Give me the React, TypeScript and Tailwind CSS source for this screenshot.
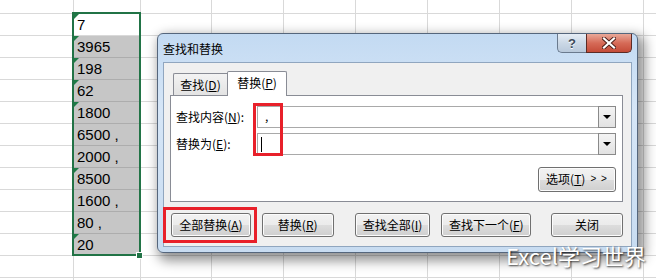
import React from "react";

// column boxes of the sheet (grid line sits on the last pixel of each box)
const cols = [
  "w-[74px]",
  "w-[67px]",
  "w-[71px]",
  "w-[72px]",
  "w-[72px]",
  "w-[72px]",
  "w-[72px]",
  "w-[72px]",
  "w-[72px]",
  "w-[72px]",
];

const values = [
  { v: "7", mark: true },
  { v: "3965", mark: true },
  { v: "198", mark: true },
  { v: "62", mark: true },
  { v: "1800", mark: true },
  { v: "6500 ,", mark: false },
  { v: "2000 ,", mark: false },
  { v: "8500", mark: true },
  { v: "1600 ,", mark: false },
  { v: "80 ,", mark: false },
  { v: "20", mark: true },
];

const cjk = "font-['Noto_Sans_CJK_SC','Liberation_Sans',sans-serif]";
const winBtn =
  "flex h-[24px] items-center justify-center rounded-[3px] border border-[#707070] bg-[linear-gradient(#f2f2f2,#ebebeb_50%,#dddddd_50%,#cfcfcf)] shadow-[inset_0_0_0_1px_#fcfcfc]";

const Sheet = () => {
  const rows = [null, ...values, null, null];
  return (
    <div className="flex flex-col font-['Liberation_Sans',sans-serif] text-[15px] text-black">
      {rows.map((cell, i) => (
        <div key={i} className={i === 0 ? "flex h-[14px] shrink-0" : "flex h-[22px] shrink-0"}>
          {cols.map((w, j) => {
            const inB = j === 1 && cell;
            const grey = inB && i >= 2;
            return (
              <div
                key={j}
                className={`relative shrink-0 border-r border-b border-[#d9d9d9] ${w} ${
                  grey ? "bg-[#c6c6c6] border-b-[#adadad]" : ""
                }`}
              >
                {inB && (
                  <>
                    {cell.mark && (
                      <div className="absolute left-0 top-0 h-0 w-0 border-t-[5px] border-r-[5px] border-t-[#1e7a46] border-r-transparent" />
                    )}
                    <span className="block pl-[3px] leading-[21px] whitespace-pre">{cell.v}</span>
                  </>
                )}
              </div>
            );
          })}
        </div>
      ))}
    </div>
  );
};

const Drop = () => (
  <div className="-my-px -mr-px flex w-[18px] items-center justify-center border border-[#8a8a8a] bg-[linear-gradient(#f4f4f4,#e2e2e2)]">
    <div className="h-0 w-0 border-x-[4px] border-t-[4px] border-x-transparent border-t-black" />
  </div>
);

const Dialog = () => (
  <div
    className={`absolute left-[157px] top-[33px] flex h-[220px] w-[481px] flex-col rounded-[6px] border border-[#55667c] bg-[linear-gradient(180deg,#c3daf2,#d6e6f7_35%,#c8dcf1)] px-[5px] pb-[5px] text-[12px] text-black shadow-[4px_5px_12px_3px_rgba(0,0,0,0.42)] ${cjk}`}
  >
    <div className="flex h-[28px] items-start justify-between">
      <span className="self-center pt-[1px] leading-none">查找和替换</span>
      <div className="flex">
        <div className="flex h-[19px] w-[29px] items-center justify-center rounded-bl-[5px] border border-t-0 border-r-0 border-[#6a7a8e] bg-[linear-gradient(#e6edf5,#cbd8e6_50%,#b9c9db)] font-['Liberation_Sans',sans-serif] text-[13px] font-bold leading-none text-[#3d4a59] [text-shadow:0_1px_0_#fff]">
          ?
        </div>
        <div className="flex h-[19px] w-[46px] items-center justify-center rounded-br-[5px] border border-t-0 border-[#5b2b25] bg-[linear-gradient(#e9a898,#d66b58_50%,#c44b38)]">
          <svg width="14" height="12" viewBox="0 0 14 12">
            <path d="M2 1.5 L12 10.5 M12 1.5 L2 10.5" stroke="#4a1d17" strokeWidth="4" strokeLinecap="square" />
            <path d="M2 1.5 L12 10.5 M12 1.5 L2 10.5" stroke="#ffffff" strokeWidth="2.2" strokeLinecap="square" />
          </svg>
        </div>
      </div>
    </div>

    <div className="flex flex-1 flex-col border border-[#90a6bf] bg-[#f0f0f0] pl-[6px] pr-[8px] pt-[8px]">
      <div className="flex h-[24px] items-end pl-[3px]">
        <div className="flex h-[22px] w-[54px] items-center justify-center rounded-tl-[2px] border border-r-0 border-b-0 border-[#898c95] bg-[linear-gradient(#f3f3f3,#e3e3e3)] pt-[1px] leading-none">
          查找(<u>D</u>)
        </div>
        <div className="relative z-10 -mb-px flex h-[25px] w-[60px] items-start justify-center rounded-t-[2px] border border-b-0 border-[#898c95] bg-white pt-[5px] leading-none">
          替换(<u>P</u>)
        </div>
      </div>

      <div className="flex h-[107px] flex-col border border-[#898c95] bg-white pt-[10px]">
        <div className="flex h-[22px] items-center">
          <span className="w-[86px] pl-[5px] leading-none">
            查找内容(<u>N</u>):
          </span>
          <div className="mr-[6px] flex h-[22px] flex-1 border border-[#a9a9a9]">
            <div className="flex-1 pl-[7px] leading-[18px]">,</div>
            <Drop />
          </div>
        </div>
        <div className="mt-[5px] flex h-[22px] items-center">
          <span className="w-[86px] pl-[5px] leading-none">
            替换为(<u>E</u>):
          </span>
          <div className="mr-[6px] flex h-[22px] flex-1 border border-[#a9a9a9]">
            <div className="flex flex-1 items-center pl-[3px]">
              <span className="h-[15px] w-px bg-black" />
            </div>
            <Drop />
          </div>
        </div>
        <div className="mr-[6px] mt-[12px] flex justify-end">
          <div className={`${winBtn} h-[25px] w-[78px] gap-[5px] pb-[1px] leading-none`}>
            <span>
              选项(<u>T</u>)
            </span>
            <span className="font-['Liberation_Sans',sans-serif] text-[10px] tracking-[1px]">&gt; &gt;</span>
          </div>
        </div>
      </div>

      <div className="ml-[1px] mt-[11px] flex leading-none">
        <div className={`${winBtn} w-[80px]`}>
          全部替换(<u>A</u>)
        </div>
        <div className={`${winBtn} ml-[11px] w-[72px]`}>
          替换(<u>R</u>)
        </div>
        <div className={`${winBtn} ml-[21px] w-[76px]`}>
          查找全部(<u>I</u>)
        </div>
        <div className={`${winBtn} ml-[11px] w-[90px] border-[#3c7fb1] shadow-[inset_0_0_0_1px_#a6def7]`}>
          查找下一个(<u>F</u>)
        </div>
        <div className={`${winBtn} ml-[20px] w-[72px]`}>关闭</div>
      </div>
    </div>
  </div>
);

export default function App() {
  return (
    <div className="relative h-[280px] w-[656px] overflow-hidden bg-white">
      <Sheet />
      {/* selection frame and fill handle */}
      <div className="absolute left-[72px] top-[12px] h-[244px] w-[69px] border-2 border-[#217346]" />
      <div className="absolute left-[136px] top-[252px] h-[7px] w-[7px] border border-white bg-[#217346]" />

      <Dialog />

      {/* red annotation boxes */}
      <div className="absolute left-[253px] top-[103px] h-[53px] w-[30px] border-[3px] border-[#e8202a]" />
      <div className="absolute left-[163px] top-[207px] h-[36px] w-[94px] border-[3px] border-[#e8202a]" />

      <div
        className={`absolute left-[506px] top-[244px] text-[22px] leading-none text-white [text-shadow:1px_1px_2px_rgba(0,0,0,0.75)] ${cjk}`}
      >
        Excel学习世界
      </div>
    </div>
  );
}
